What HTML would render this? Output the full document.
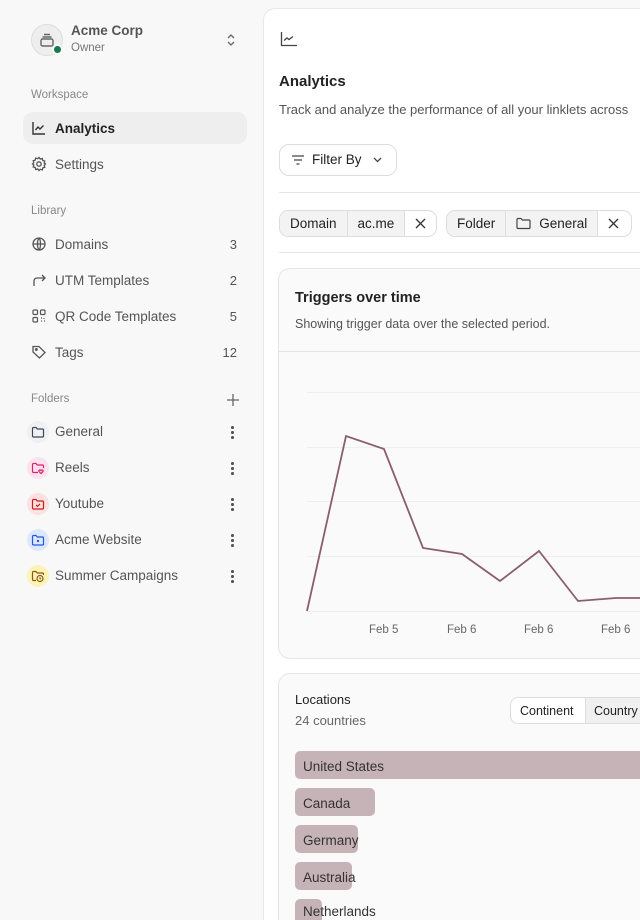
<!DOCTYPE html>
<html style="width:640px;height:920px;overflow:hidden"><head><style>
*{box-sizing:border-box;margin:0;padding:0}
body{width:640px;height:920px;overflow:hidden;background:#f8f8f8;font-family:"Liberation Sans",sans-serif;color:#333;position:relative}
.abs{position:absolute}
.nav{position:absolute;left:23px;width:224px;height:32px;display:flex;align-items:center;font-size:13.5px;color:#555}
.nav svg{position:absolute;left:8px}
.nav .t{position:absolute;left:32px}
.nav .c{position:absolute;right:10px;font-size:13px;color:#555}
.sec{position:absolute;left:31px;font-size:11.5px;color:#888}
.fi{position:absolute;left:27px;width:22px;height:22px;border-radius:50%;display:flex;align-items:center;justify-content:center}
.dots{position:absolute;left:231px;width:3px}
.dots i{display:block;width:2.5px;height:2.5px;background:#555;border-radius:50%;margin-bottom:2.5px}
.chip{position:absolute;top:210px;height:27px;border:1px solid #ddd;border-radius:9px;display:flex;font-size:13.5px;color:#222;overflow:hidden;background:#fff}
.chip span{display:flex;align-items:center;padding:0 10px;border-right:1px solid #ddd}
.chip span:last-child{border-right:none}
.bar{position:absolute;left:295px;height:28px;background:#c6b3b8;border-radius:5px}
.bl{position:absolute;left:303px;font-size:13.5px;color:#333;line-height:16px}
</style></head><body>
<div class="abs" style="left:0;top:0;width:640px;height:920px;overflow:hidden">
<!-- sidebar -->
<div class="abs" style="left:31px;top:24px;width:32px;height:32px;border-radius:50%;background:#eee;border:1px solid #ddd"></div>
<svg class="abs" style="left:38px;top:31px" width="18" height="18" viewBox="0 0 18 18" fill="none" stroke="#666" stroke-width="1.4"><path d="M6 3.5h6M4.5 6h9"/><rect x="3" y="8" width="12" height="7" rx="1.5"/></svg>
<div class="abs" style="left:52px;top:44px;width:11px;height:11px;border-radius:50%;background:#137a50;border:2px solid #f8f8f8"></div>
<div class="abs" style="left:71px;top:23px;font-size:13.5px;font-weight:bold;color:#555">Acme Corp</div>
<div class="abs" style="left:71px;top:42px;font-size:11.5px;color:#777">Owner</div>
<svg class="abs" style="left:224px;top:32px" width="14" height="16" viewBox="0 0 14 16" fill="none" stroke="#666" stroke-width="1.3"><path d="M4 6l3-3 3 3M4 10l3 3 3-3"/></svg>

<div class="sec" style="top:89px">Workspace</div>
<div class="nav" style="top:112px;background:#eeeeee;border-radius:10px;color:#222">
<svg width="16" height="16" viewBox="0 0 16 16" fill="none" stroke="#333" stroke-width="1.4"><path d="M2 2v12h12"/><path d="M4.5 10l2.5-3 2 2 3.5-3.5"/></svg><span class="t" style="font-weight:bold">Analytics</span></div>
<div class="nav" style="top:148px"><svg width="16" height="16" viewBox="0 0 16 16" fill="none" stroke="#555" stroke-width="1.3"><circle cx="8" cy="8" r="2.2"/><path d="M8 1.5l1.3 1.6 2-.6.5 2 2 .6-.6 2L14.5 8l-1.3 1.3.6 2-2 .6-.5 2-2-.6L8 14.5l-1.3-1.6-2 .6-.5-2-2-.6.6-2L1.5 8l1.3-1.3-.6-2 2-.6.5-2 2 .6z"/></svg><span class="t">Settings</span></div>

<div class="sec" style="top:205px">Library</div>
<div class="nav" style="top:228px"><svg width="16" height="16" viewBox="0 0 16 16" fill="none" stroke="#555" stroke-width="1.3"><circle cx="8" cy="8" r="6"/><path d="M2 8h12M8 2c2 2 2 10 0 12M8 2c-2 2-2 10 0 12"/></svg><span class="t">Domains</span><span class="c">3</span></div>
<div class="nav" style="top:264px"><svg width="16" height="16" viewBox="0 0 16 16" fill="none" stroke="#555" stroke-width="1.3"><path d="M3 14V9a3 3 0 0 1 3-3h8M11 3l3 3-3 3"/></svg><span class="t">UTM Templates</span><span class="c">2</span></div>
<div class="nav" style="top:300px"><svg width="16" height="16" viewBox="0 0 16 16" fill="none" stroke="#555" stroke-width="1.2"><rect x="2" y="2" width="4.5" height="4.5" rx="1"/><rect x="9.5" y="2" width="4.5" height="4.5" rx="1"/><rect x="2" y="9.5" width="4.5" height="4.5" rx="1"/><path d="M10 10h1M13 10v1M10 13h1M13 13h1"/></svg><span class="t">QR Code Templates</span><span class="c">5</span></div>
<div class="nav" style="top:336px"><svg width="16" height="16" viewBox="0 0 16 16" fill="none" stroke="#555" stroke-width="1.3"><path d="M2 2.5h6l6 6-5.5 5.5-6.5-6z"/><circle cx="5.3" cy="5.5" r=".8"/></svg><span class="t">Tags</span><span class="c">12</span></div>

<div class="sec" style="top:393px">Folders</div>
<svg class="abs" style="left:226px;top:393px" width="14" height="14" viewBox="0 0 14 14" stroke="#666" stroke-width="1.3"><path d="M7 1v12M1 7h12"/></svg>

<div class="fi" style="top:421px;background:#eef0f3"><svg width="14" height="14" viewBox="0 0 14 14" fill="none" stroke="#3d4658" stroke-width="1.2"><path d="M1.5 3.5a1 1 0 0 1 1-1H5l1.3 1.5h5.2a1 1 0 0 1 1 1v6a1 1 0 0 1-1 1h-9a1 1 0 0 1-1-1z"/></svg></div>
<div class="abs" style="left:55px;top:424px;font-size:13.5px;color:#555">General</div>
<div class="dots" style="top:426px"><i></i><i></i><i></i></div>
<div class="fi" style="top:457px;background:#fde2ee"><svg width="14" height="14" viewBox="0 0 14 14" fill="none" stroke="#d6246e" stroke-width="1.2"><path d="M7 11.5H2.5a1 1 0 0 1-1-1v-7a1 1 0 0 1 1-1H5l1.3 1.5h5.2a1 1 0 0 1 1 1V7"/><path d="M10 12.5l-2-2a1 1 0 0 1 2-1 1 1 0 0 1 2 1z"/></svg></div>
<div class="abs" style="left:55px;top:460px;font-size:13.5px;color:#555">Reels</div>
<div class="dots" style="top:462px"><i></i><i></i><i></i></div>
<div class="fi" style="top:493px;background:#fde0e0"><svg width="14" height="14" viewBox="0 0 14 14" fill="none" stroke="#c81e1e" stroke-width="1.2"><path d="M1.5 3.5a1 1 0 0 1 1-1H5l1.3 1.5h5.2a1 1 0 0 1 1 1v6a1 1 0 0 1-1 1h-9a1 1 0 0 1-1-1z"/><path d="M5 8l1.5 1.3L9 7"/></svg></div>
<div class="abs" style="left:55px;top:496px;font-size:13.5px;color:#555">Youtube</div>
<div class="dots" style="top:498px"><i></i><i></i><i></i></div>
<div class="fi" style="top:529px;background:#dce8fd"><svg width="14" height="14" viewBox="0 0 14 14" fill="none" stroke="#2257e0" stroke-width="1.2"><path d="M1.5 3.5a1 1 0 0 1 1-1H5l1.3 1.5h5.2a1 1 0 0 1 1 1v6a1 1 0 0 1-1 1h-9a1 1 0 0 1-1-1z"/><circle cx="7" cy="8" r=".6" fill="#2257e0"/></svg></div>
<div class="abs" style="left:55px;top:532px;font-size:13.5px;color:#555">Acme Website</div>
<div class="dots" style="top:534px"><i></i><i></i><i></i></div>
<div class="fi" style="top:565px;background:#fdf2b8"><svg width="14" height="14" viewBox="0 0 14 14" fill="none" stroke="#8a5a10" stroke-width="1.2"><path d="M5 11.5H2.5a1 1 0 0 1-1-1v-7a1 1 0 0 1 1-1H5l1.3 1.5h5.2a1 1 0 0 1 1 1v1"/><circle cx="9" cy="9.5" r="3"/><path d="M9 8.3v1.3l.8.6"/></svg></div>
<div class="abs" style="left:55px;top:568px;font-size:13.5px;color:#555">Summer Campaigns</div>
<div class="dots" style="top:570px"><i></i><i></i><i></i></div>

<!-- main -->
<div class="abs" style="left:263px;top:8px;width:377px;height:912px;background:#fff;border:1px solid #e8e8e8;border-right:none;border-bottom:none;border-radius:12px 0 0 0"></div>
<svg class="abs" style="left:280px;top:31px" width="18" height="16" viewBox="0 0 18 16" fill="none" stroke="#444" stroke-width="1.3"><path d="M1.5 1v13.5H17"/><path d="M4 9.5l3-2.5 2 1.5 4-3"/></svg>
<div class="abs" style="left:279px;top:73px;font-size:15px;font-weight:bold;color:#222">Analytics</div>
<div class="abs" style="left:279px;top:102px;width:361px;overflow:hidden;font-size:13px;color:#555;white-space:nowrap">Track and analyze the performance of all your linklets across</div>

<div class="abs" style="left:279px;top:144px;width:118px;height:32px;border:1px solid #ddd;border-radius:10px;background:#fff"></div>
<svg class="abs" style="left:291px;top:153px" width="14" height="14" viewBox="0 0 14 14" stroke="#444" stroke-width="1.3"><path d="M1 3h12M3 7h8M5.5 11h3"/></svg>
<div class="abs" style="left:312px;top:152px;font-size:13.5px;color:#222">Filter By</div>
<svg class="abs" style="left:372px;top:155px" width="11" height="10" viewBox="0 0 11 10" fill="none" stroke="#444" stroke-width="1.3"><path d="M2 3l3.5 3.5L9 3"/></svg>
<div class="abs" style="left:279px;top:192px;width:361px;height:1px;background:#e6e6e6"></div>

<div class="chip" style="left:279px;width:158px"><span style="background:#f3f3f3">Domain</span><span style="background:#f3f3f3">ac.me</span><span><svg width="11" height="11" viewBox="0 0 11 11" stroke="#333" stroke-width="1.3"><path d="M1 1l9 9M10 1l-9 9"/></svg></span></div>
<div class="chip" style="left:446px;width:186px"><span style="background:#f3f3f3">Folder</span><span style="background:#f3f3f3"><svg width="15" height="13" viewBox="0 0 15 13" fill="none" stroke="#444" stroke-width="1.2" style="margin-right:8px"><path d="M1 2.5a1 1 0 0 1 1-1h3l1.4 1.5H13a1 1 0 0 1 1 1v6.5a1 1 0 0 1-1 1H2a1 1 0 0 1-1-1z"/></svg>General</span><span><svg width="11" height="11" viewBox="0 0 11 11" stroke="#333" stroke-width="1.3"><path d="M1 1l9 9M10 1l-9 9"/></svg></span></div>
<div class="abs" style="left:279px;top:252px;width:361px;height:1px;background:#e6e6e6"></div>

<!-- chart card -->
<div class="abs" style="left:278px;top:268px;width:362px;height:391px;background:#fafafa;border:1px solid #e5e5e5;border-right:none;border-radius:12px 0 0 12px"></div>
<div class="abs" style="left:279px;top:351px;width:361px;height:1px;background:#e3e3e3"></div>
<div class="abs" style="left:295px;top:290px;font-size:14.5px;font-weight:bold;color:#222">Triggers over time</div>
<div class="abs" style="left:295px;top:317px;font-size:12.5px;color:#555">Showing trigger data over the selected period.</div>
<svg class="abs" style="left:0;top:0" width="640" height="920" fill="none">
<g stroke="#efefef" stroke-width="1"><path d="M307 392.5H640M307 447.5H640M307 501.5H640M307 556.5H640M307 611.5H640"/></g>
<polyline points="307,611 346,436 384,449 423,548 462,554 500,581 539,551 578,601 616,598 640,598" stroke="#8a5e6b" stroke-width="1.8"/>
</svg>
<div class="abs" style="left:369px;top:624px;font-size:11.5px;color:#666">Feb 5</div>
<div class="abs" style="left:447px;top:624px;font-size:11.5px;color:#666">Feb 6</div>
<div class="abs" style="left:524px;top:624px;font-size:11.5px;color:#666">Feb 6</div>
<div class="abs" style="left:601px;top:624px;font-size:11.5px;color:#666">Feb 6</div>

<!-- locations -->
<div class="abs" style="left:278px;top:673px;width:362px;height:247px;background:#fafafa;border:1px solid #e5e5e5;border-right:none;border-bottom:none;border-radius:12px 0 0 0"></div>
<div class="abs" style="left:295px;top:692px;font-size:13px;color:#222">Locations</div>
<div class="abs" style="left:295px;top:713px;font-size:13px;color:#666">24 countries</div>
<div class="abs" style="left:510px;top:697px;width:130px;height:27px;border:1px solid #ddd;border-right:none;border-radius:8px 0 0 8px;background:#fff;overflow:hidden;font-size:12.5px;color:#222">
<span class="abs" style="left:9px;top:6px">Continent</span>
<span class="abs" style="left:74px;top:0;width:56px;height:27px;background:#f0f0f0;border-left:1px solid #ddd;padding:6px 8px;white-space:nowrap">Country</span></div>
<div class="bar" style="top:751px;width:345px;border-radius:5px 0 0 5px"></div><div class="bl" style="top:759px">United States</div>
<div class="bar" style="top:788px;width:80px"></div><div class="bl" style="top:796px">Canada</div>
<div class="bar" style="top:825px;width:63px"></div><div class="bl" style="top:833px">Germany</div>
<div class="bar" style="top:862px;width:57px"></div><div class="bl" style="top:870px">Australia</div>
<div class="bar" style="top:899px;width:27px;height:21px;border-radius:5px 5px 0 0"></div><div class="bl" style="top:904px">Netherlands</div>
</div>
</body></html>
